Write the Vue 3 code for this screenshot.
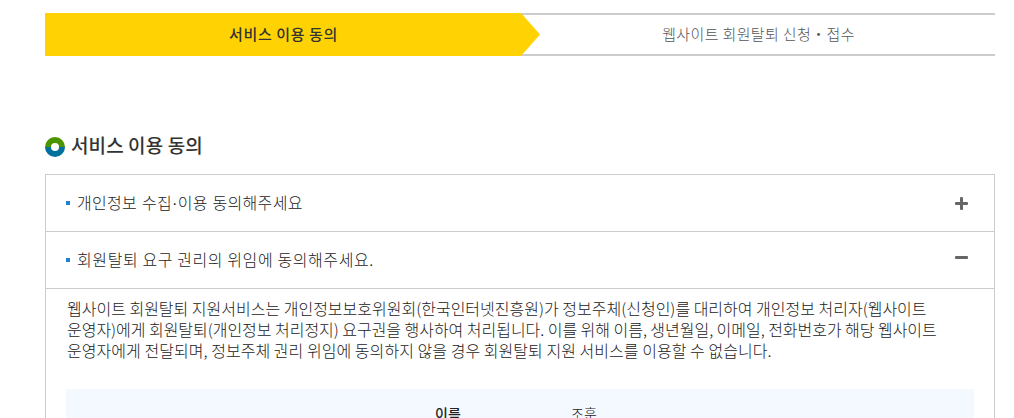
<template>
  <div class="page">
    <!-- 진행 단계 -->
    <ol class="steps">
      <li class="step active">
        <span class="step-text">서비스 이용 동의</span>
        <svg class="arrow" width="20" height="43" viewBox="0 0 20 43">
          <path d="M0 0 H1 L20 21.5 L1 43 H0 Z" fill="#ffd204" />
        </svg>
      </li>
      <li class="step next"><span class="step-text">웹사이트 회원탈퇴 신청・접수</span></li>
    </ol>

    <h2 class="title">
      <svg class="title-icon" width="20" height="20" viewBox="0 0 20 20">
        <path d="M0 10 A10 10 0 0 1 20 10 Z" fill="#4a9400" />
        <path d="M0 10 A10 10 0 0 0 20 10 Z" fill="#00709c" />
        <circle cx="10" cy="10" r="4" fill="#fff" />
      </svg>
      <span class="title-text">서비스 이용 동의</span>
    </h2>

    <!-- 동의 항목 -->
    <div class="accordion">
      <div v-for="(item, index) in items" :key="index" class="item">
        <button class="item-header" @click="toggle(index)">
          <span class="bullet"></span>
          <span class="item-text" :class="{ dotted: item.title.includes('·') }">{{ item.title }}</span>
          <svg class="toggle-icon" :class="{ opened: item.open }" width="13" height="13" viewBox="0 0 13 13">
            <rect x="0" y="5" width="13" height="3" rx="1" fill="#666" />
            <rect v-if="!item.open" x="5" y="0" width="3" height="13" rx="1" fill="#666" />
          </svg>
        </button>
        <div v-if="item.open" class="item-body">
          <p class="guide">
            <span v-for="(line, n) in item.lines" :key="n" class="line" :class="'line-' + n">{{ line }}</span>
          </p>
          <dl class="info">
            <dt>이름</dt>
            <dd>조훈</dd>
          </dl>
        </div>
      </div>
    </div>
  </div>
</template>

<script setup>
import { ref } from "vue";

const items = ref([
  { title: "개인정보 수집·이용 동의해주세요", open: false, lines: [] },
  {
    title: "회원탈퇴 요구 권리의 위임에 동의해주세요.",
    open: true,
    lines: [
      "웹사이트 회원탈퇴 지원서비스는 개인정보보호위원회(한국인터넷진흥원)가 정보주체(신청인)를 대리하여 개인정보 처리자(웹사이트",
      "운영자)에게 회원탈퇴(개인정보 처리정지) 요구권을 행사하여 처리됩니다. 이를 위해 이름, 생년월일, 이메일, 전화번호가 해당 웹사이트",
      "운영자에게 전달되며, 정보주체 권리 위임에 동의하지 않을 경우 회원탈퇴 지원 서비스를 이용할 수 없습니다.",
    ],
  },
]);

const toggle = (index) => {
  items.value[index].open = !items.value[index].open;
};
</script>

<style>
body {
  background-color: #fff;
}
</style>

<style scoped>
.page {
  box-sizing: border-box;
  height: 418px;
  padding: 13px 19px 0 45px;
  overflow: hidden;
  font-family: "Noto Sans CJK KR", sans-serif;
  font-weight: 300;
  color: #222;
}

.steps {
  display: flex;
  height: 43px;
  margin: 0;
  padding: 0;
  list-style: none;
}

.step {
  box-sizing: border-box;
  display: flex;
  flex: 1;
  align-items: center;
  justify-content: center;
  font-size: 15px;
  line-height: 22px;
  letter-spacing: 0.36px;
  white-space: nowrap;
}

.step-text {
  padding: 0 0 2px 2px;
}

.step.active {
  position: relative;
  background-color: #ffd204;
  font-weight: 500;
  letter-spacing: 0.6px;
  color: #333;
}

.step.next {
  border-top: 2px solid #ccc;
  border-bottom: 2px solid #ccc;
  color: #555;
}

.arrow {
  position: absolute;
  top: 0;
  right: -20px;
}

.title {
  display: flex;
  align-items: center;
  gap: 6px;
  height: 28px;
  margin: 76px 0 14px;
  font-size: 19px;
  font-weight: 500;
  line-height: 28px;
  letter-spacing: 0.1px;
  color: #333;
}

.title-icon {
  margin-top: 2px;
}

.title-text {
  padding-bottom: 2px;
}

.accordion {
  height: 300px;
  border: 1px solid #ccc;
}

.item-header {
  display: flex;
  align-items: center;
  width: 100%;
  height: 57px;
  padding: 0 26px 0 20px;
  border: none;
  border-bottom: 1px solid #ccc;
  background: none;
  font: inherit;
  font-size: 16px;
  color: inherit;
  text-align: left;
  cursor: pointer;
}

.bullet {
  width: 4px;
  height: 4px;
  margin-right: 7px;
  background-color: #1f82d2;
}

.item-text {
  padding-bottom: 2px;
  line-height: 24px;
  letter-spacing: 0.6px;
  white-space: nowrap;
}

/* 가운뎃점을 좁게 */
.item-text.dotted {
  padding: 2px 0 0;
  font-family: "Liberation Sans", "Noto Sans CJK KR", sans-serif;
  letter-spacing: 0.32px;
}

.toggle-icon {
  margin-left: auto;
}

.toggle-icon.opened {
  margin-bottom: 5px;
}

.item-body {
  padding: 9px 20px 0;
}

.guide {
  margin: 0 0 28px;
  padding-left: 1px;
  font-size: 16px;
  line-height: 21px;
}

.line {
  display: block;
  width: max-content;
  white-space: nowrap;
}

.line-1 {
  letter-spacing: -0.03px;
}

.line-2 {
  letter-spacing: 0.05px;
}

.info {
  display: flex;
  height: 100px;
  margin: 0;
  padding-top: 13px;
  background-color: #f4f9ff;
  font-size: 14px;
  line-height: 22px;
}

.info dt {
  width: 136px;
  padding-left: 369px;
  font-weight: 500;
}

.info dd {
  margin: 0;
}
</style>
